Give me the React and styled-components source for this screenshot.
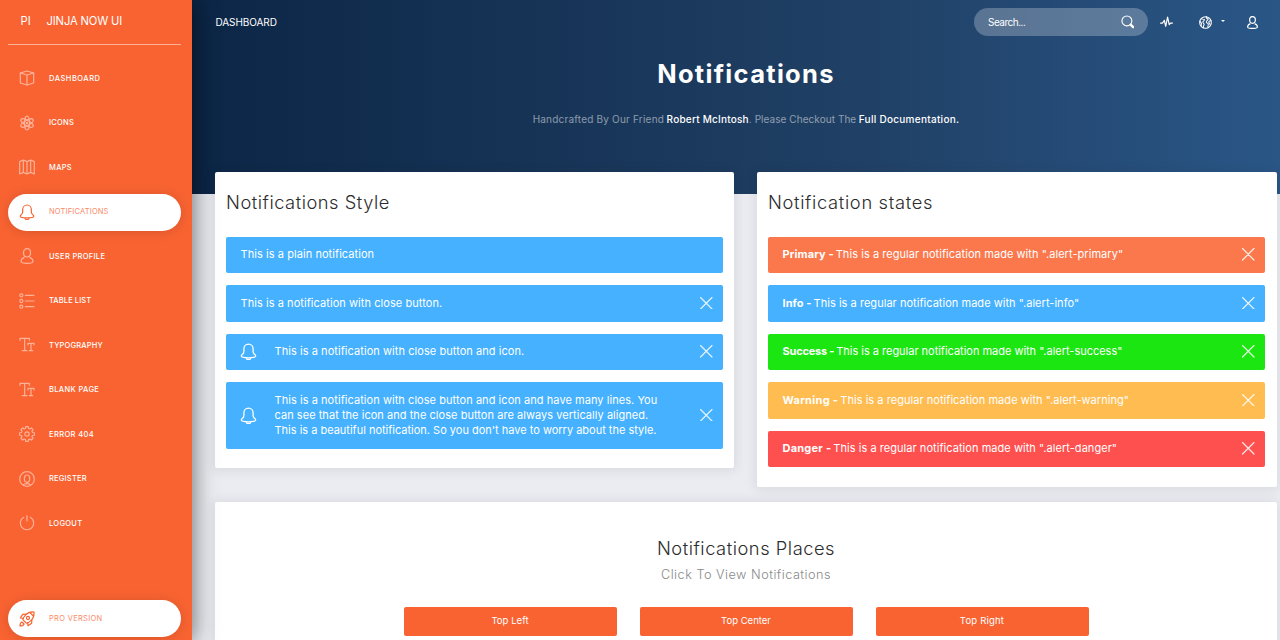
import React from 'react';
import styled, { createGlobalStyle, css } from 'styled-components';

const GlobalStyle = createGlobalStyle`
  *, *::before, *::after { box-sizing: border-box; }
  html, body { margin: 0; padding: 0; height: 100%; overflow: hidden; }
  body { font-family: Inter, "Open Sans", sans-serif; background: #ebecf1; color: #2c2c2c; }
  h1, h2, h3, p { margin: 0; }
  a { color: inherit; text-decoration: none; }
  button { font: inherit; border: 0; background: none; padding: 0; color: inherit; }
`;

const Text = styled.span`
  letter-spacing: ${(p) => p.$track || 0}px;
  white-space: nowrap;
`;

/* ---------- icons ---------- */

const Svg = styled.svg`
  display: block;
  flex: none;
  width: ${(p) => p.$size}px;
  height: ${(p) => p.$size}px;
  fill: none;
  stroke: currentColor;
  stroke-width: ${(p) => p.$weight || 1.8};
  stroke-linecap: round;
  stroke-linejoin: round;
`;

const gearPath = (() => {
  const teeth = 8;
  const points = [];
  for (let i = 0; i < teeth; i += 1) {
    const a = (i * 2 * Math.PI) / teeth;
    [[-0.27, 8.6], [-0.17, 11.2], [0.17, 11.2], [0.27, 8.6]].forEach(([d, r]) => {
      points.push(`${(12 + r * Math.cos(a + d)).toFixed(2)} ${(12 + r * Math.sin(a + d)).toFixed(2)}`);
    });
  }
  return `M${points.join('L')}Z`;
})();

const shapes = {
  box: (
    <>
      <path d="M12 1.500 22 4.500v15L12 22.500 2 19.500V4.500Z" />
      <path d="M2 4.500 12 7.500l10-3M12 7.500v15" />
    </>
  ),
  atom: (
    <>
      <ellipse cx="12" cy="12" rx="3.800" ry="10.500" />
      <ellipse cx="12" cy="12" rx="3.800" ry="10.500" transform="rotate(60 12 12)" />
      <ellipse cx="12" cy="12" rx="3.800" ry="10.500" transform="rotate(120 12 12)" />
      <circle cx="12" cy="12" r="1" />
    </>
  ),
  map: <path d="M1 4 6.500 1.500 12 4 17.500 1.500 23 4V22.500l-5.500-2.500L12 22.500l-5.500-2.500L1 22.500ZM6.500 1.500V20M12 4V22.500M17.500 1.500V20" />,
  bell: (
    <>
      <path d="M18.500 12.500V8.300a6.500 6.800 0 0 0-13 0v4.200c0 3-3.700 3.800-3.700 6 0 1.700 5 2.400 10.200 2.400s10.200-.7 10.200-2.400c0-2.200-3.700-3-3.700-6Z" />
      <path d="M9 21.500a3 1.800 0 0 0 6 0" />
    </>
  ),
  user: (
    <>
      <path d="M12 13.500c-3.100 0-5.300-2.900-5.300-6.400S8.900 1 12 1s5.300 2.600 5.300 6.100-2.200 6.400-5.300 6.400Z" />
      <path d="M7.500 14.500C4.500 15.500 3 17.300 3 20.300 3 22.300 7 23 12 23s9-.7 9-2.700c0-3-1.500-4.800-4.500-5.800" />
    </>
  ),
  list: (
    <>
      <circle cx="3.500" cy="3.500" r="2.300" />
      <circle cx="3.500" cy="12" r="2.300" />
      <circle cx="3.500" cy="20.500" r="2.300" />
      <path d="M9.500 3.500H22.500M9.500 12H22.500M9.500 20.500H22.500" />
    </>
  ),
  type: (
    <>
      <path d="M1.500 5V2h14v3M8.500 2v18.500M5 20.500h7" />
      <path d="M13.500 12V9.500H22.500V12M18 9.500v11M15.500 20.500h5" />
    </>
  ),
  gear: (
    <>
      <path d={gearPath} />
      <circle cx="12" cy="12" r="3.300" />
    </>
  ),
  badge: (
    <>
      <circle cx="12" cy="12" r="11" />
      <path d="M12 17c-2.300 0-4-2-4-5.300S9.500 6 12 6s4 2.200 4 5.500-1.700 5.500-4 5.500Z" />
      <path d="M6.500 21c.8-1.500 3-2 5.500-2s4.700.5 5.500 2" />
    </>
  ),
  power: <path d="M12 1v8M7 3.500a10 10 0 1 0 10 0" />,
  rocket: (
    <>
      <path d="M22.500 1.500c-5-.3-9.500 1-12.500 4.200-2.600 2.800-4 5.300-4.200 7.300l5.200 5.200c2-.2 4.500-1.600 7.300-4.200C21.500 11 22.800 6.500 22.500 1.500Z" />
      <path d="M10.500 4.800 5.500 5 2 10.500l4.500.5M19.200 13.500l-.2 5-5.500 3.500-.5-4.500" />
      <circle cx="13.500" cy="10.500" r="2.300" />
      <path d="M16.500 2.500 21.500 7.500M4.500 16.500c-2 .5-3 2-3 6 4 0 5.500-1 6-3Z" />
    </>
  ),
  search: (
    <>
      <circle cx="10.500" cy="10.500" r="8.800" />
      <path d="m17.500 17.500 4 4" strokeWidth="4.500" />
    </>
  ),
  pulse: <path d="M1 13h3.500l3.500-5 2.500 11 3.500-17 3 14 2.500-3H23" />,
  globe: (
    <>
      <circle cx="12" cy="12" r="10.800" />
      <path d="M4 5c2.500.2 3.500 1.500 6 1.500 1 2-2.500 2.500-3 4.500-.4 1.800 2.300 2 2.500 4 .1 2-1.500 2.500-1.500 6M1.500 9.500l3 3.500-.5 5M14 1.500c-1.500 2.500.5 3.500 3 3.500 1 2-3.500 3-3.500 6 0 2 2.500 2 3.500 3.500.8 1.500-1 3.500-.5 6M22.500 9c-2-.8-4.500.5-4.500 2.500 0 1.500 2.500 2 2.500 5" />
    </>
  ),
  close: <path d="m1 1 22 22M23 1 1 23" />,
};

const Icon = ({ name, size, weight }) => (
  <Svg viewBox="0 0 24 24" $size={size} $weight={weight} aria-hidden="true">
    {shapes[name]}
  </Svg>
);

/* ---------- sidebar ---------- */

const Page = styled.div`
  display: flex;
  height: 640px;
  overflow: hidden;
`;

const Sidebar = styled.aside`
  position: relative;
  z-index: 2;
  flex: none;
  display: flex;
  flex-direction: column;
  width: 192px;
  height: 640px;
  padding: 0 11px 3px 8px;
  background: #f96332;
  color: #fff;
  box-shadow: 0 2px 16px rgba(0, 0, 0, 0.2), 3px 2px 23px rgba(0, 0, 0, 0.35);
`;

const Brand = styled.a`
  display: flex;
  align-items: center;
  height: 45px;
  padding: 0 0 2px 12.500px;
  border-bottom: 1px solid rgba(255, 255, 255, 0.5);
  font-size: 11.200px;
`;

const BrandMini = styled.span`
  width: 26px;
`;

const Menu = styled.nav`
  display: flex;
  flex: 1;
  flex-direction: column;
  gap: 7.500px;
  padding-top: 15px;
`;

const MenuItem = styled.a`
  display: flex;
  align-items: center;
  gap: 14px;
  height: 37px;
  padding: 0 0 1px 11px;
  border-radius: 19px;
  font-size: 7.500px;
  font-weight: 500;

  svg { opacity: 0.5; }

  ${(p) => p.$active && css`
    background: #fff;
    color: #f96332;
    font-weight: 400;
    box-shadow: 0 1px 12px rgba(0, 0, 0, 0.14);
    svg { opacity: 1; }
    span { opacity: 0.75; }
  `}

  ${(p) => p.$bottom && css`
    margin-top: auto;
    padding-bottom: 0;
  `}
`;

/* ---------- main panel ---------- */

const Main = styled.main`
  flex: none;
  width: 1108px;
`;

const PanelHeader = styled.header`
  height: 194px;
  padding: 0 23px;
  background: linear-gradient(90deg, #0c2646 0%, #204065 60%, #2a5788 100%);
  color: #fff;
`;

const Navbar = styled.div`
  display: flex;
  align-items: center;
  height: 44px;
  font-size: 10px;
`;

const PageName = styled.a`
  margin-right: auto;
  padding-left: 0.500px;
  letter-spacing: -0.080px;
`;

const SearchBox = styled.label`
  display: flex;
  align-items: center;
  justify-content: space-between;
  width: 174px;
  height: 28px;
  padding: 0 14px;
  border-radius: 14px;
  background: rgba(255, 255, 255, 0.25);
`;

const NavActions = styled.div`
  display: flex;
  align-items: center;
  width: 129px;
  padding-left: 12px;
`;

const GlobeMenu = styled.button`
  display: flex;
  align-items: center;
  gap: 9px;
  margin: 0 21px 0 26px;
`;

const Caret = styled.i`
  margin-top: -2px;
  border: solid transparent;
  border-width: 2px 2px 0;
  border-top-color: #fff;
`;

const Title = styled.h1`
  padding-top: 13px;
  font-size: 25.500px;
  line-height: 34px;
  font-weight: 700;
  text-align: center;
`;

const Credits = styled.p`
  display: flex;
  justify-content: center;
  gap: 2.500px;
  padding-top: 20px;
  font-size: 10px;
  line-height: 17px;
  color: rgba(255, 255, 255, 0.5);
`;

const CreditLink = styled.a`
  color: #fff;
  font-weight: 500;
`;

const LinkGroup = styled.span`
  display: flex;
`;

const Content = styled.div`
  display: flex;
  flex-direction: column;
  width: 1062px;
  margin: -22px 0 0 23px;
  gap: 15px;
  position: relative;
`;

const Row = styled.div`
  display: grid;
  grid-template-columns: 519px 520px;
  align-items: start;
  gap: 23px;
`;

const Card = styled.section`
  min-height: ${(p) => p.$height}px;
  padding: 0 ${(p) => p.$endPad || 11}px 0 11px;
  border-radius: 2px;
  background: #fff;
  box-shadow: 0 1px 12px 1px rgba(39, 39, 39, 0.1);
`;

const CardTitle = styled.h2`
  height: 64.900px;
  padding-top: 18px;
  font-size: 18.300px;
  line-height: 24px;
  font-weight: 300;
`;

const Alerts = styled.div`
  display: flex;
  flex-direction: column;
  gap: 12.100px;
`;

const tones = {
  primary: '#fb784d',
  info: '#45b1ff',
  success: '#1be611',
  warning: '#ffbc51',
  danger: '#ff5050',
};

const AlertBox = styled.div`
  display: flex;
  align-items: center;
  height: ${(p) => (p.$tall ? 66.5 : 36.4)}px;
  padding: 0 10.500px 0 14.500px;
  border-radius: 2px;
  background: ${(p) => tones[p.$tone]};
  color: #fff;
  font-size: 11px;
  line-height: 15px;
`;

const AlertIcon = styled.span`
  width: 34.500px;
  margin: 0 0 1px -0.500px;
`;

const AlertText = styled.div`
  display: flex;
  flex-direction: ${(p) => (p.$stacked ? 'column' : 'row')};
  flex: 1;
  margin-top: -1px;
  gap: ${(p) => (p.$stacked ? 0 : 2)}px;
  white-space: nowrap;
`;

const Strong = styled.b`
  font-weight: 700;
  letter-spacing: ${(p) => p.$track}px;
`;

const CloseButton = styled.button`
  opacity: 0.85;
  margin-bottom: 1px;
`;

const PlacesHead = styled.div`
  padding-top: 34px;
  height: 105px;
  text-align: center;
`;

const PlacesTitle = styled.h2`
  font-size: 18.300px;
  line-height: 25px;
  font-weight: 300;
`;

const PlacesHint = styled.p`
  font-size: 12.700px;
  line-height: 27px;
  font-weight: 300;
  color: #8a8a8a;
`;

const ButtonRow = styled.div`
  display: grid;
  grid-template-columns: repeat(3, 213px);
  justify-content: center;
  gap: 23px;
`;

const PlaceButton = styled.button`
  height: 29px;
  padding-bottom: 2px;
  border-radius: 2px;
  background: #f96332;
  color: #fff;
  font-size: 9.500px;
`;

/* ---------- data ---------- */

const menu = [
  ['box', 'DASHBOARD', 0.52],
  ['atom', 'ICONS', 0.25],
  ['map', 'MAPS', 0.3],
  ['bell', 'NOTIFICATIONS', 0.17],
  ['user', 'USER PROFILE', 0.32],
  ['list', 'TABLE LIST', 0.1],
  ['type', 'TYPOGRAPHY', 0.17],
  ['type', 'BLANK PAGE', 0.35],
  ['gear', 'ERROR 404', 0.4],
  ['badge', 'REGISTER', 0.2],
  ['power', 'LOGOUT', 0.3],
];

const styleAlerts = [
  { lines: [['This is a plain notification', 0.065]] },
  { lines: [['This is a notification with close button.', 0.062]], close: true },
  { lines: [['This is a notification with close button and icon.', 0.06]], close: true, icon: true },
  {
    lines: [
      ['This is a notification with close button and icon and have many lines. You', 0.056],
      ['can see that the icon and the close button are always vertically aligned.', 0.043],
      ["This is a beautiful notification. So you don't have to worry about the style.", -0.006],
    ],
    close: true,
    icon: true,
  },
];

const stateAlerts = [
  ['primary', 'Primary', 0.12, 0.055],
  ['info', 'Info', 0.08, 0.035],
  ['success', 'Success', -0.21, -0.02],
  ['warning', 'Warning', 0.29, 0.045],
  ['danger', 'Danger', 0.23, 0.05],
];

const places = [['Top Left', 0.05], ['Top Center', 0], ['Top Right', 0.2]];

function Alert({ tone = 'info', icon, close, stacked, children }) {
  return (
    <AlertBox $tone={tone} $tall={stacked} role="alert">
      {icon && <AlertIcon><Icon name="bell" size={17} weight={1.8} /></AlertIcon>}
      <AlertText $stacked={stacked}>{children}</AlertText>
      {close && <CloseButton aria-label="Close"><Icon name="close" size={12.5} weight={2.4} /></CloseButton>}
    </AlertBox>
  );
}

export default function App() {
  return (
    <>
      <GlobalStyle />
      <Page>
        <Sidebar>
          <Brand href="#">
            <BrandMini>PI</BrandMini>
            <Text $track={-0.14}>JINJA NOW UI</Text>
          </Brand>
          <Menu>
            {menu.map(([icon, label, track]) => (
              <MenuItem key={label} href="#" $active={label === 'NOTIFICATIONS'}>
                <Icon name={icon} size={16} />
                <Text $track={track}>{label}</Text>
              </MenuItem>
            ))}
            <MenuItem href="#" $active $bottom>
              <Icon name="rocket" size={16} />
              <Text $track={0.3}>PRO VERSION</Text>
            </MenuItem>
          </Menu>
        </Sidebar>

        <Main>
          <PanelHeader>
            <Navbar>
              <PageName href="#">DASHBOARD</PageName>
              <SearchBox>
                <Text $track={-0.5}>Search...</Text>
                <Icon name="search" size={13.5} weight={2} />
              </SearchBox>
              <NavActions>
                <Icon name="pulse" size={13} weight={2.2} />
                <GlobeMenu aria-label="Language">
                  <Icon name="globe" size={13} weight={1.9} />
                  <Caret />
                </GlobeMenu>
                <Icon name="user" size={13} weight={2.2} />
              </NavActions>
            </Navbar>
            <Title><Text $track={1.3}>Notifications</Text></Title>
            <Credits>
              <Text $track={0.2}>Handcrafted By Our Friend</Text>
              <LinkGroup>
                <CreditLink href="#"><Text $track={0.22}>Robert McIntosh</Text></CreditLink>
                <Text $track={0.06}>. Please Checkout The</Text>
              </LinkGroup>
              <CreditLink href="#"><Text $track={0.28}>Full Documentation.</Text></CreditLink>
            </Credits>
          </PanelHeader>

          <Content>
            <Row>
              <Card $height={296}>
                <CardTitle><Text $track={0.53}>Notifications Style</Text></CardTitle>
                <Alerts>
                  {styleAlerts.map(({ lines, close, icon }) => (
                    <Alert key={lines[0][0]} close={close} icon={icon} stacked={lines.length > 1}>
                      {lines.map(([line, track]) => <Text key={line} $track={track}>{line}</Text>)}
                    </Alert>
                  ))}
                </Alerts>
              </Card>
              <Card $height={315} $endPad={12}>
                <CardTitle><Text $track={0.67}>Notification states</Text></CardTitle>
                <Alerts>
                  {stateAlerts.map(([tone, label, boldTrack, track]) => (
                    <Alert key={tone} tone={tone} close>
                      <Strong $track={boldTrack}>{label} -</Strong>
                      <Text $track={track}>{`This is a regular notification made with ".alert-${tone}"`}</Text>
                    </Alert>
                  ))}
                </Alerts>
              </Card>
            </Row>

            <Card $height={200}>
              <PlacesHead>
                <PlacesTitle><Text $track={0.54}>Notifications Places</Text></PlacesTitle>
                <PlacesHint><Text $track={0.49}>Click To View Notifications</Text></PlacesHint>
              </PlacesHead>
              <ButtonRow>
                {places.map(([label, track]) => (
                  <PlaceButton key={label}><Text $track={track}>{label}</Text></PlaceButton>
                ))}
              </ButtonRow>
            </Card>
          </Content>
        </Main>
      </Page>
    </>
  );
}
